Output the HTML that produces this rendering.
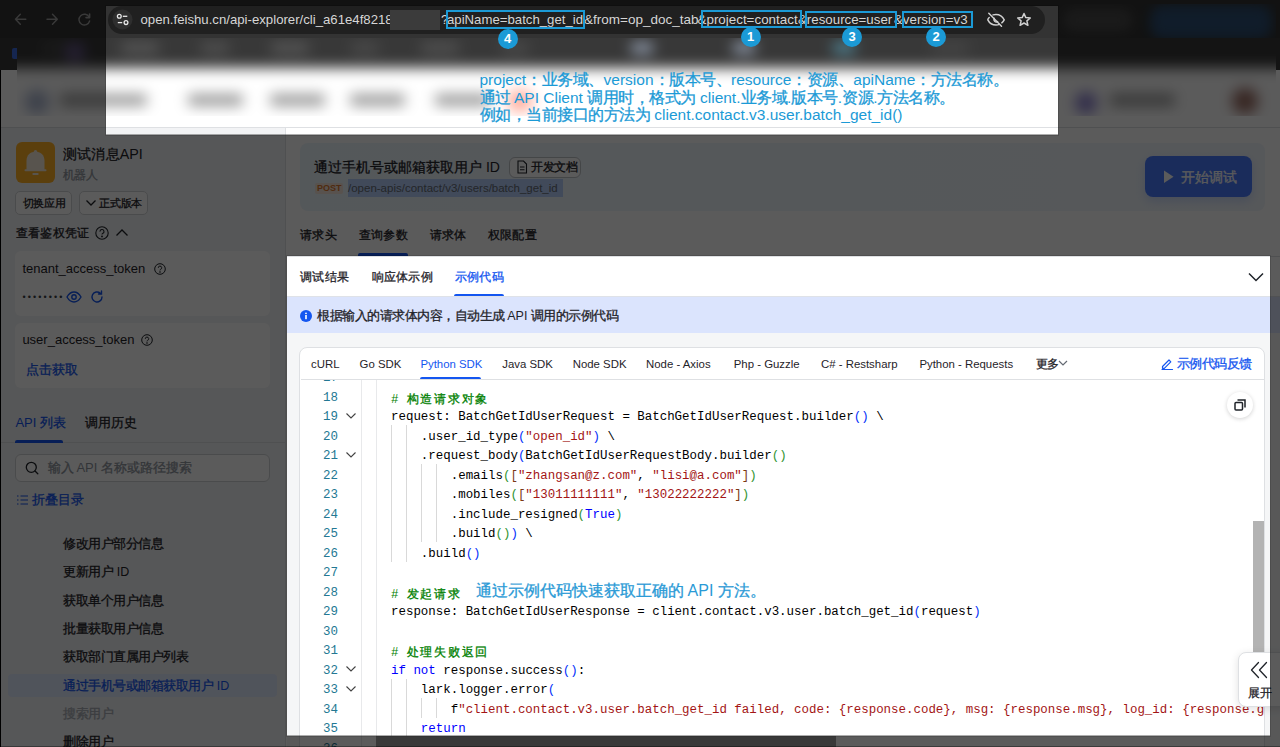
<!DOCTYPE html>
<html><head><meta charset="utf-8"><style>
html,body{margin:0;padding:0;width:1280px;height:747px;overflow:hidden;background:#fff;}
body{position:relative;font-family:"Liberation Sans",sans-serif;}
.t{position:absolute;white-space:pre;}
.r{position:absolute;box-sizing:border-box;}
.c,.cm{display:inline-block;width:1em;text-align:center;-webkit-text-stroke:.3px}
.cm{width:1.1em}
svg{position:absolute;overflow:visible;}
</style></head><body>

<div class="r" style="left:0px;top:0px;width:1280px;height:38px;background:#333333;"></div>
<svg style="left:0;top:0" width="120" height="38" fill="none" stroke="#a0a0a0" stroke-width="1.4" stroke-linecap="round" stroke-linejoin="round"><path d="M15.5 19.3H25.8M15.5 19.3L20.3 14.3M15.5 19.3L20.3 24.3"/><path d="M57.3 19.3H47M57.3 19.3L52.5 14.3M57.3 19.3L52.5 24.3"/><path d="M89.2 17.2A5.4 5.4 0 1 0 89.6 21"/><path d="M89.6 14V17.6H86" stroke-width="1.6"/></svg>
<div class="r" style="left:108px;top:6px;width:937px;height:27.5px;background:#202020;border-radius:14px"></div>
<svg style="left:108px;top:5px" width="30" height="30"><circle cx="14.5" cy="14.5" r="10" fill="#2e2e2e"/><g stroke="#e8e8e8" stroke-width="1.3" fill="none"><circle cx="11.3" cy="11.3" r="1.9"/><path d="M14.8 11.3H19.3"/><circle cx="18" cy="17.6" r="1.9"/><path d="M9.8 17.6H14.2"/></g></svg>
<div class="t" style="left:140.5px;top:10.50px;font-size:13.2px;line-height:18px;color:#d6d6d6;font-weight:400;font-family:'Liberation Sans', sans-serif;">open.feishu.cn/api-explorer/cli_a61e4f8218</div>
<div class="r" style="left:390px;top:10px;width:50px;height:20px;background:#3b3b3b;"></div>
<div class="t" style="left:441px;top:10.50px;font-size:13.2px;line-height:18px;color:#d6d6d6;font-weight:400;font-family:'Liberation Sans', sans-serif;">?</div>
<div class="t" style="left:447px;top:10.50px;font-size:13.2px;line-height:18px;color:#d6d6d6;font-weight:400;font-family:'Liberation Sans', sans-serif;">apiName=batch_get_id</div>
<div class="t" style="left:584px;top:10.00px;font-size:13.5px;line-height:19px;color:#d6d6d6;font-weight:400;font-family:'Liberation Sans', sans-serif;">&amp;from=op_doc_tab</div>
<div class="t" style="left:697.5px;top:10.00px;font-size:13.4px;line-height:19px;color:#d6d6d6;font-weight:400;font-family:'Liberation Sans', sans-serif;">&amp;project=contact</div>
<div class="t" style="left:798px;top:10.00px;font-size:13.3px;line-height:19px;color:#d6d6d6;font-weight:400;font-family:'Liberation Sans', sans-serif;">&amp;resource=user</div>
<div class="t" style="left:894px;top:10.00px;font-size:13.3px;line-height:19px;color:#d6d6d6;font-weight:400;font-family:'Liberation Sans', sans-serif;">&amp;version=v3</div>
<svg style="left:986px;top:11px" width="20" height="18" fill="none" stroke="#d0d0d0" stroke-width="1.5" stroke-linecap="round"><path d="M3.2 6.5C2.3 7.3 1.8 8.2 1.8 8.8C3.3 11.8 6.3 14 10 14C11.2 14 12.3 13.8 13.2 13.3M7 3.9C8 3.6 9 3.5 10 3.5C13.7 3.5 16.7 5.8 18.2 8.8C17.6 10 16.8 11 15.8 11.8"/><path d="M8.3 7.3A2.4 2.4 0 0 0 11.6 10.6"/><path d="M2.8 2.3L15.5 15.3"/></svg>
<svg style="left:1016px;top:11.5px" width="16" height="16" fill="none" stroke="#d0d0d0" stroke-width="1.5" stroke-linejoin="round"><path d="M8 1.5L9.8 5.6L14.3 6L10.9 8.9L11.9 13.3L8 11L4.1 13.3L5.1 8.9L1.7 6L6.2 5.6Z"/></svg>
<div class="r" style="left:1058px;top:4px;width:218px;height:34px;overflow:hidden;background:#333"><div style="position:absolute;left:-20px;top:-20px;width:260px;height:80px;filter:blur(6px)"><div style="position:absolute;left:25px;top:24px;width:70px;height:24px;background:#4a4a4a;border-radius:12px"></div><div style="position:absolute;left:112px;top:21px;width:122px;height:34px;background:#2d4f75;border-radius:14px"></div></div></div>
<div class="r" style="left:0px;top:38px;width:1280px;height:32px;background:#383838;"></div>
<div class="r" style="left:0px;top:70px;width:1280px;height:57px;background:#ffffff;"></div>
<div class="r" style="left:0px;top:127px;width:1280px;height:1px;background:#dee0e3;"></div>
<div class="r" style="left:12px;top:48px;width:8px;height:11px;background:#3d6be0;border-radius:2px"></div>
<div class="r" style="left:17px;top:38px;width:1259px;height:78px;overflow:hidden"><div style="position:absolute;left:-40px;top:-40px;width:1340px;height:160px;filter:blur(7px)"><div style="position:absolute;left:0;top:0;width:1340px;height:70px;background:#383838"></div><div style="position:absolute;left:0;top:70px;width:1340px;height:90px;background:#ffffff"></div><div style="position:absolute;left:63px;top:44px;width:30px;height:12px;background:#4a4a4a;border-radius:6px"></div><div style="position:absolute;left:143px;top:44px;width:40px;height:12px;background:#555;border-radius:6px"></div><div style="position:absolute;left:223px;top:44px;width:30px;height:12px;background:#505050;border-radius:6px"></div><div style="position:absolute;left:293px;top:44px;width:40px;height:12px;background:#555;border-radius:6px"></div><div style="position:absolute;left:373px;top:44px;width:30px;height:12px;background:#4a4a4a;border-radius:6px"></div><div style="position:absolute;left:443px;top:44px;width:40px;height:12px;background:#505050;border-radius:6px"></div><div style="position:absolute;left:523px;top:44px;width:30px;height:12px;background:#4a4a4a;border-radius:6px"></div><div style="position:absolute;left:653px;top:44px;width:24px;height:12px;background:#8a94a4;border-radius:6px"></div><div style="position:absolute;left:755px;top:44px;width:24px;height:12px;background:#8a94a4;border-radius:6px"></div><div style="position:absolute;left:855px;top:44px;width:24px;height:12px;background:#4f8090;border-radius:6px"></div><div style="position:absolute;left:953px;top:44px;width:40px;height:12px;background:#454545;border-radius:6px"></div><div style="position:absolute;left:48px;top:92px;width:24px;height:24px;background:#a8b4d0;border-radius:12px"></div><div style="position:absolute;left:83px;top:96px;width:87px;height:12px;background:#9a9a9a;border-radius:4px"></div><div style="position:absolute;left:211px;top:96px;width:55px;height:12px;background:#9a9a9a;border-radius:4px"></div><div style="position:absolute;left:293px;top:96px;width:55px;height:12px;background:#9a9a9a;border-radius:4px"></div><div style="position:absolute;left:373px;top:96px;width:55px;height:12px;background:#9a9a9a;border-radius:4px"></div><div style="position:absolute;left:458px;top:96px;width:55px;height:12px;background:#9a9a9a;border-radius:4px"></div><div style="position:absolute;left:1133px;top:96px;width:65px;height:12px;background:#9a9a9a;border-radius:4px"></div><div style="position:absolute;left:88px;top:44px;width:20px;height:20px;background:#6a5a90;border-radius:10px"></div><div style="position:absolute;left:1098px;top:94px;width:22px;height:22px;background:#8a7fd0;border-radius:11px"></div><div style="position:absolute;left:1255px;top:90px;width:26px;height:26px;background:#9a6a60;border-radius:13px"></div><div style="position:absolute;left:530px;top:92px;width:26px;height:22px;background:#ffb0a0;border-radius:11px"></div></div></div>
<div class="r" style="left:0px;top:128px;width:286px;height:619px;background:#f2f3f5;"></div>
<div class="r" style="left:285px;top:128px;width:1px;height:619px;background:#dee0e3;"></div>
<div class="r" style="left:15.5px;top:142px;width:39.5px;height:41px;background:#ffb026;border-radius:6px"></div>
<svg style="left:15.5px;top:142px" width="40" height="41"><g fill="#f4f4f4" opacity=".88"><path d="M10.5 28V19C10.5 12.8 14.5 9.8 19.5 9.8S28.5 12.8 28.5 19V28Z"/><circle cx="19.5" cy="9.6" r="1.7"/><rect x="8.5" y="27.2" width="22" height="2.1" rx="1"/><rect x="16.3" y="31" width="6.4" height="2" rx="1"/></g></svg>
<div class="t" style="left:62.5px;top:144.00px;font-size:14.3px;line-height:20px;color:#1f2329;font-weight:500;font-family:'Liberation Sans', sans-serif;"><span class=c>测</span><span class=c>试</span><span class=c>消</span><span class=c>息</span>API</div>
<div class="t" style="left:62.5px;top:166.70px;font-size:11.5px;line-height:16px;color:#8f959e;font-weight:400;font-family:'Liberation Sans', sans-serif;"><span class=c>机</span><span class=c>器</span><span class=c>人</span></div>
<div class="r" style="left:15px;top:191px;width:57px;height:24px;background:#fff;border:1px solid #d0d3d6;border-radius:5px"></div>
<div class="t" style="left:22.5px;top:195.50px;font-size:10.8px;line-height:15px;color:#1f2329;font-weight:400;font-family:'Liberation Sans', sans-serif;"><span class=c>切</span><span class=c>换</span><span class=c>应</span><span class=c>用</span></div>
<div class="r" style="left:79px;top:191px;width:69px;height:24px;background:#fff;border:1px solid #d0d3d6;border-radius:5px"></div>
<svg style="left:85px;top:199px" width="12" height="8" fill="none" stroke="#1f2329" stroke-width="1.3"><path d="M1.5 1.5L6 6L10.5 1.5"/></svg>
<div class="t" style="left:99px;top:195.50px;font-size:10.8px;line-height:15px;color:#1f2329;font-weight:400;font-family:'Liberation Sans', sans-serif;"><span class=c>正</span><span class=c>式</span><span class=c>版</span><span class=c>本</span></div>
<div class="t" style="left:15.7px;top:224.50px;font-size:12.3px;line-height:17px;color:#1f2329;font-weight:500;font-family:'Liberation Sans', sans-serif;"><span class=c>查</span><span class=c>看</span><span class=c>鉴</span><span class=c>权</span><span class=c>凭</span><span class=c>证</span></div>
<svg style="left:95px;top:226px" width="14" height="14" fill="none" stroke="#1f2329" stroke-width="1.1"><circle cx="7" cy="7" r="6.2"/><path d="M5 5.6A2 2 0 1 1 7.6 7.4C7.1 7.7 7 8 7 8.6"/><circle cx="7" cy="10.4" r=".4" fill="#1f2329"/></svg>
<svg style="left:115px;top:228px" width="14" height="10" fill="none" stroke="#1f2329" stroke-width="1.3"><path d="M1.5 7.5L7 2L12.5 7.5"/></svg>
<div class="r" style="left:15px;top:251px;width:255px;height:65px;background:#ffffff;border-radius:6px"></div>
<div class="t" style="left:22.4px;top:260.00px;font-size:13px;line-height:18px;color:#1f2329;font-weight:400;font-family:'Liberation Sans', sans-serif;">tenant_access_token</div>
<svg style="left:153.5px;top:263px" width="12" height="12" fill="none" stroke="#1f2329" stroke-width="1"><circle cx="6" cy="6" r="5.3"/><path d="M4.3 4.8A1.7 1.7 0 1 1 6.5 6.4C6.1 6.6 6 6.9 6 7.4"/><circle cx="6" cy="9" r=".35" fill="#1f2329"/></svg>
<div class="t" style="left:22.5px;top:290.50px;font-size:9px;line-height:13px;color:#3a3f47;font-weight:400;font-family:'Liberation Sans', sans-serif;letter-spacing:2.1px">••••••••</div>
<svg style="left:66px;top:291px" width="16" height="12" fill="none" stroke="#1456f0" stroke-width="1.4"><path d="M1 6C3 2.5 5.5 1 8 1S13 2.5 15 6C13 9.5 10.5 11 8 11S3 9.5 1 6Z"/><circle cx="8" cy="6" r="2.2"/></svg>
<svg style="left:90px;top:290px" width="14" height="14" fill="none" stroke="#1456f0" stroke-width="1.4" stroke-linecap="round"><path d="M12 7A5 5 0 1 1 10.3 3.2M11.5 1V4H8.5"/></svg>
<div class="r" style="left:15px;top:323px;width:255px;height:65px;background:#ffffff;border-radius:6px"></div>
<div class="t" style="left:22.4px;top:331.40px;font-size:13px;line-height:18px;color:#1f2329;font-weight:400;font-family:'Liberation Sans', sans-serif;">user_access_token</div>
<svg style="left:141px;top:334.4px" width="12" height="12" fill="none" stroke="#1f2329" stroke-width="1"><circle cx="6" cy="6" r="5.3"/><path d="M4.3 4.8A1.7 1.7 0 1 1 6.5 6.4C6.1 6.6 6 6.9 6 7.4"/><circle cx="6" cy="9" r=".35" fill="#1f2329"/></svg>
<div class="t" style="left:26px;top:360.50px;font-size:13px;line-height:18px;color:#1456f0;font-weight:400;font-family:'Liberation Sans', sans-serif;"><span class=c>点</span><span class=c>击</span><span class=c>获</span><span class=c>取</span></div>
<div class="t" style="left:15.4px;top:414.00px;font-size:13px;line-height:18px;color:#1456f0;font-weight:500;font-family:'Liberation Sans', sans-serif;">API <span class=c>列</span><span class=c>表</span></div>
<div class="t" style="left:85px;top:414.00px;font-size:13px;line-height:18px;color:#1f2329;font-weight:400;font-family:'Liberation Sans', sans-serif;"><span class=c>调</span><span class=c>用</span><span class=c>历</span><span class=c>史</span></div>
<div class="r" style="left:0px;top:442px;width:285px;height:1px;background:#dee0e3;"></div>
<div class="r" style="left:15px;top:440px;width:48px;height:3px;background:#1456f0;border-radius:2px 2px 0 0"></div>
<div class="r" style="left:15px;top:454px;width:255px;height:28px;background:#ffffff;border:1px solid #d0d3d6;border-radius:6px"></div>
<svg style="left:25px;top:461px" width="14" height="14" fill="none" stroke="#1f2329" stroke-width="1.3" stroke-linecap="round"><circle cx="6.3" cy="6.3" r="5"/><path d="M10 10L12.8 12.8"/></svg>
<div class="t" style="left:47.5px;top:459.00px;font-size:13px;line-height:18px;color:#8f959e;font-weight:400;font-family:'Liberation Sans', sans-serif;"><span class=c>输</span><span class=c>入</span> API <span class=c>名</span><span class=c>称</span><span class=c>或</span><span class=c>路</span><span class=c>径</span><span class=c>搜</span><span class=c>索</span></div>
<svg style="left:16px;top:494px" width="12" height="12" fill="none" stroke="#1456f0" stroke-width="1"><path d="M4.5 2H12M4.5 6H12M4.5 10H12"/><path d="M1 2H2.5M1 6H2.5M1 10H2.5"/></svg>
<div class="t" style="left:32px;top:491.00px;font-size:13px;line-height:18px;color:#1456f0;font-weight:500;font-family:'Liberation Sans', sans-serif;"><span class=c>折</span><span class=c>叠</span><span class=c>目</span><span class=c>录</span></div>
<div class="r" style="left:8px;top:673.5px;width:269px;height:23.5px;background:#e1eaff;border-radius:4px"></div>
<div class="t" style="left:63.3px;top:535.20px;font-size:12.5px;line-height:18px;color:#1f2329;font-weight:400;font-family:'Liberation Sans', sans-serif;"><span class=c>修</span><span class=c>改</span><span class=c>用</span><span class=c>户</span><span class=c>部</span><span class=c>分</span><span class=c>信</span><span class=c>息</span></div>
<div class="t" style="left:63.3px;top:563.40px;font-size:12.5px;line-height:18px;color:#1f2329;font-weight:400;font-family:'Liberation Sans', sans-serif;"><span class=c>更</span><span class=c>新</span><span class=c>用</span><span class=c>户</span> ID</div>
<div class="t" style="left:63.3px;top:592.00px;font-size:12.5px;line-height:18px;color:#1f2329;font-weight:400;font-family:'Liberation Sans', sans-serif;"><span class=c>获</span><span class=c>取</span><span class=c>单</span><span class=c>个</span><span class=c>用</span><span class=c>户</span><span class=c>信</span><span class=c>息</span></div>
<div class="t" style="left:63.3px;top:620.20px;font-size:12.5px;line-height:18px;color:#1f2329;font-weight:400;font-family:'Liberation Sans', sans-serif;"><span class=c>批</span><span class=c>量</span><span class=c>获</span><span class=c>取</span><span class=c>用</span><span class=c>户</span><span class=c>信</span><span class=c>息</span></div>
<div class="t" style="left:63.3px;top:648.40px;font-size:12.5px;line-height:18px;color:#1f2329;font-weight:400;font-family:'Liberation Sans', sans-serif;"><span class=c>获</span><span class=c>取</span><span class=c>部</span><span class=c>门</span><span class=c>直</span><span class=c>属</span><span class=c>用</span><span class=c>户</span><span class=c>列</span><span class=c>表</span></div>
<div class="t" style="left:63.3px;top:677.20px;font-size:12.5px;line-height:18px;color:#1456f0;font-weight:400;font-family:'Liberation Sans', sans-serif;"><span class=c>通</span><span class=c>过</span><span class=c>手</span><span class=c>机</span><span class=c>号</span><span class=c>或</span><span class=c>邮</span><span class=c>箱</span><span class=c>获</span><span class=c>取</span><span class=c>用</span><span class=c>户</span> ID</div>
<div class="t" style="left:63.3px;top:704.80px;font-size:12.5px;line-height:18px;color:#a6abb3;font-weight:400;font-family:'Liberation Sans', sans-serif;"><span class=c>搜</span><span class=c>索</span><span class=c>用</span><span class=c>户</span></div>
<div class="t" style="left:63.3px;top:733.10px;font-size:12.5px;line-height:18px;color:#1f2329;font-weight:400;font-family:'Liberation Sans', sans-serif;"><span class=c>删</span><span class=c>除</span><span class=c>用</span><span class=c>户</span></div>
<div class="r" style="left:0px;top:70px;width:1px;height:677px;background:#000000;"></div>
<div class="r" style="left:287px;top:128px;width:993px;height:128px;background:#ffffff;"></div>
<div class="r" style="left:300px;top:142.5px;width:965px;height:68.0px;background:linear-gradient(90deg,#ecf5fb,#f1f6fc);border-radius:8px"></div>
<div class="t" style="left:314px;top:157.00px;font-size:14px;line-height:20px;color:#1f2329;font-weight:500;font-family:'Liberation Sans', sans-serif;"><span class=c>通</span><span class=c>过</span><span class=c>手</span><span class=c>机</span><span class=c>号</span><span class=c>或</span><span class=c>邮</span><span class=c>箱</span><span class=c>获</span><span class=c>取</span><span class=c>用</span><span class=c>户</span> ID</div>
<div class="r" style="left:508.75px;top:156.5px;width:72.5px;height:21.0px;background:#ffffff;border:1px solid #bfc3c8;border-radius:6px"></div>
<svg style="left:516px;top:160px" width="12" height="14" fill="none" stroke="#1f2329" stroke-width="1.1"><path d="M2 1H7.5L10.5 4V13H2Z"/><path d="M4 7H8.5M4 9.8H8.5"/></svg>
<div class="t" style="left:531px;top:158.50px;font-size:11.5px;line-height:16px;color:#1f2329;font-weight:400;font-family:'Liberation Sans', sans-serif;"><span class=c>开</span><span class=c>发</span><span class=c>文</span><span class=c>档</span></div>
<div class="r" style="left:314.5px;top:183px;width:28.5px;height:11px;background:#f6e6da;border-radius:2px"></div>
<div class="t" style="left:317px;top:182.00px;font-size:9px;line-height:13px;color:#de7a30;font-weight:700;font-family:'Liberation Sans', sans-serif;">POST</div>
<div class="r" style="left:347.5px;top:179px;width:215.0px;height:18px;background:#b5cffc;"></div>
<div class="t" style="left:348px;top:180.00px;font-size:11.5px;line-height:16px;color:#646a73;font-weight:400;font-family:'Liberation Sans', sans-serif;">/open-apis/contact/v3/users/batch_get_id</div>
<div class="r" style="left:1145px;top:156px;width:107px;height:41px;background:#4A7CFF;border-radius:8px;box-shadow:0 4px 10px rgba(51,112,255,.2)"></div>
<svg style="left:1163px;top:170px" width="12" height="14"><path d="M1 0.5L10.5 6.75L1 13Z" fill="#fff"/></svg>
<div class="t" style="left:1180.5px;top:166.50px;font-size:14px;line-height:20px;color:#ffffff;font-weight:400;font-family:'Liberation Sans', sans-serif;"><span class=c>开</span><span class=c>始</span><span class=c>调</span><span class=c>试</span></div>
<div class="t" style="left:300px;top:226.50px;font-size:12.3px;line-height:17px;color:#1f2329;font-weight:400;font-family:'Liberation Sans', sans-serif;"><span class=c>请</span><span class=c>求</span><span class=c>头</span></div>
<div class="t" style="left:358.75px;top:226.50px;font-size:12.3px;line-height:17px;color:#1f2329;font-weight:500;font-family:'Liberation Sans', sans-serif;"><span class=c>查</span><span class=c>询</span><span class=c>参</span><span class=c>数</span></div>
<div class="t" style="left:429.5px;top:226.50px;font-size:12.3px;line-height:17px;color:#1f2329;font-weight:400;font-family:'Liberation Sans', sans-serif;"><span class=c>请</span><span class=c>求</span><span class=c>体</span></div>
<div class="t" style="left:487.5px;top:226.50px;font-size:12.3px;line-height:17px;color:#1f2329;font-weight:400;font-family:'Liberation Sans', sans-serif;"><span class=c>权</span><span class=c>限</span><span class=c>配</span><span class=c>置</span></div>
<div class="r" style="left:358px;top:252.5px;width:50px;height:3.5px;background:#1456f0;border-radius:2px 2px 0 0"></div>
<div class="r" style="left:287px;top:256px;width:993px;height:491px;background:#ffffff;border-top:1px solid #dee0e3"></div>
<div class="t" style="left:300px;top:268.50px;font-size:12.3px;line-height:17px;color:#1f2329;font-weight:400;font-family:'Liberation Sans', sans-serif;"><span class=c>调</span><span class=c>试</span><span class=c>结</span><span class=c>果</span></div>
<div class="t" style="left:371.4px;top:268.50px;font-size:12.3px;line-height:17px;color:#1f2329;font-weight:400;font-family:'Liberation Sans', sans-serif;"><span class=c>响</span><span class=c>应</span><span class=c>体</span><span class=c>示</span><span class=c>例</span></div>
<div class="t" style="left:454.5px;top:268.50px;font-size:12.3px;line-height:17px;color:#1456f0;font-weight:500;font-family:'Liberation Sans', sans-serif;"><span class=c>示</span><span class=c>例</span><span class=c>代</span><span class=c>码</span></div>
<div class="r" style="left:454px;top:294px;width:50px;height:2.5px;background:#1456f0;border-radius:2px 2px 0 0"></div>
<svg style="left:1248px;top:272px" width="16" height="10" fill="none" stroke="#1f2329" stroke-width="1.5"><path d="M1 1.5L8 8.5L15 1.5"/></svg>
<div class="r" style="left:287px;top:296px;width:993px;height:36.5px;background:#dbe4fd;border-top:1px solid #dfe2e8"></div>
<svg style="left:299.7px;top:309.7px" width="12" height="12"><circle cx="6" cy="6" r="6" fill="#1456f0"/><rect x="5.2" y="5" width="1.6" height="4.2" fill="#fff"/><circle cx="6" cy="3.3" r="0.9" fill="#fff"/></svg>
<div class="t" style="left:317px;top:306.70px;font-size:12.5px;line-height:18px;color:#1f2329;font-weight:400;font-family:'Liberation Sans', sans-serif;"><span class=c>根</span><span class=c>据</span><span class=c>输</span><span class=c>入</span><span class=c>的</span><span class=c>请</span><span class=c>求</span><span class=c>体</span><span class=c>内</span><span class=c>容</span><span class=c>，</span><span class=c>自</span><span class=c>动</span><span class=c>生</span><span class=c>成</span> API <span class=c>调</span><span class=c>用</span><span class=c>的</span><span class=c>示</span><span class=c>例</span><span class=c>代</span><span class=c>码</span></div>
<div class="r" style="left:287px;top:332.5px;width:993px;height:414.5px;background:#f5f6f7;"></div>
<div class="r" style="left:299px;top:347px;width:966px;height:413px;background:#ffffff;border:1px solid #dee0e3;border-radius:8px"></div>
<div class="t" style="left:311px;top:356.00px;font-size:11.4px;line-height:16px;color:#1f2329;font-weight:400;font-family:'Liberation Sans', sans-serif;">cURL</div>
<div class="t" style="left:359.6px;top:356.00px;font-size:11.4px;line-height:16px;color:#1f2329;font-weight:400;font-family:'Liberation Sans', sans-serif;">Go SDK</div>
<div class="t" style="left:420.4px;top:356.00px;font-size:11.4px;line-height:16px;color:#1456f0;font-weight:400;font-family:'Liberation Sans', sans-serif;">Python SDK</div>
<div class="t" style="left:502.3px;top:356.00px;font-size:11.4px;line-height:16px;color:#1f2329;font-weight:400;font-family:'Liberation Sans', sans-serif;">Java SDK</div>
<div class="t" style="left:572.7px;top:356.00px;font-size:11.4px;line-height:16px;color:#1f2329;font-weight:400;font-family:'Liberation Sans', sans-serif;">Node SDK</div>
<div class="t" style="left:646px;top:356.00px;font-size:11.4px;line-height:16px;color:#1f2329;font-weight:400;font-family:'Liberation Sans', sans-serif;">Node - Axios</div>
<div class="t" style="left:733.75px;top:356.00px;font-size:11.4px;line-height:16px;color:#1f2329;font-weight:400;font-family:'Liberation Sans', sans-serif;">Php - Guzzle</div>
<div class="t" style="left:821px;top:356.00px;font-size:11.4px;line-height:16px;color:#1f2329;font-weight:400;font-family:'Liberation Sans', sans-serif;">C# - Restsharp</div>
<div class="t" style="left:919.4px;top:356.00px;font-size:11.4px;line-height:16px;color:#1f2329;font-weight:400;font-family:'Liberation Sans', sans-serif;">Python - Requests</div>
<div class="t" style="left:1035.9px;top:356.00px;font-size:11.5px;line-height:16px;color:#1f2329;font-weight:400;font-family:'Liberation Sans', sans-serif;"><span class=c>更</span><span class=c>多</span></div>
<svg style="left:1058px;top:360px" width="10" height="7" fill="none" stroke="#646a73" stroke-width="1.2"><path d="M1 1L5 5L9 1"/></svg>
<svg style="left:1160px;top:357px" width="14" height="14" fill="none" stroke="#1456f0" stroke-width="1.2" stroke-linejoin="round" stroke-linecap="round"><path d="M2.5 9.5L9 3L10.8 4.8L4.3 11.3H2.5Z"/><path d="M2 12.5H12.5"/></svg>
<div class="t" style="left:1176.8px;top:355.00px;font-size:12.5px;line-height:18px;color:#1456f0;font-weight:400;font-family:'Liberation Sans', sans-serif;"><span class=c>示</span><span class=c>例</span><span class=c>代</span><span class=c>码</span><span class=c>反</span><span class=c>馈</span></div>
<div class="r" style="left:420.3px;top:377px;width:61.0px;height:2.5px;background:#1456f0;border-radius:2px 2px 0 0"></div>
<div class="r" style="left:301px;top:379px;width:963px;height:1px;background:#dee0e3;"></div>
<div class="r" style="left:301px;top:380px;width:963px;height:370px;overflow:hidden">
<div class="r" style="left:60px;top:0px;width:1px;height:400px;background:#e8e9eb;"></div>
<div class="r" style="left:75px;top:0px;width:1px;height:400px;background:#e8e9eb;"></div>
<div class="r" style="left:90px;top:45.25px;width:1px;height:19.5px;background:#d9d9d9;"></div>
<div class="r" style="left:105px;top:45.25px;width:1px;height:19.5px;background:#d9d9d9;"></div>
<div class="r" style="left:90px;top:64.75px;width:1px;height:19.5px;background:#d9d9d9;"></div>
<div class="r" style="left:105px;top:64.75px;width:1px;height:19.5px;background:#d9d9d9;"></div>
<div class="r" style="left:90px;top:84.25px;width:1px;height:19.5px;background:#d9d9d9;"></div>
<div class="r" style="left:105px;top:84.25px;width:1px;height:19.5px;background:#d9d9d9;"></div>
<div class="r" style="left:120px;top:84.25px;width:1px;height:19.5px;background:#d9d9d9;"></div>
<div class="r" style="left:135px;top:84.25px;width:1px;height:19.5px;background:#d9d9d9;"></div>
<div class="r" style="left:90px;top:103.75px;width:1px;height:19.5px;background:#d9d9d9;"></div>
<div class="r" style="left:105px;top:103.75px;width:1px;height:19.5px;background:#d9d9d9;"></div>
<div class="r" style="left:120px;top:103.75px;width:1px;height:19.5px;background:#d9d9d9;"></div>
<div class="r" style="left:135px;top:103.75px;width:1px;height:19.5px;background:#d9d9d9;"></div>
<div class="r" style="left:90px;top:123.25px;width:1px;height:19.5px;background:#d9d9d9;"></div>
<div class="r" style="left:105px;top:123.25px;width:1px;height:19.5px;background:#d9d9d9;"></div>
<div class="r" style="left:120px;top:123.25px;width:1px;height:19.5px;background:#d9d9d9;"></div>
<div class="r" style="left:135px;top:123.25px;width:1px;height:19.5px;background:#d9d9d9;"></div>
<div class="r" style="left:90px;top:142.75px;width:1px;height:19.5px;background:#d9d9d9;"></div>
<div class="r" style="left:105px;top:142.75px;width:1px;height:19.5px;background:#d9d9d9;"></div>
<div class="r" style="left:120px;top:142.75px;width:1px;height:19.5px;background:#d9d9d9;"></div>
<div class="r" style="left:135px;top:142.75px;width:1px;height:19.5px;background:#d9d9d9;"></div>
<div class="r" style="left:90px;top:162.25px;width:1px;height:19.5px;background:#d9d9d9;"></div>
<div class="r" style="left:105px;top:162.25px;width:1px;height:19.5px;background:#d9d9d9;"></div>
<div class="r" style="left:90px;top:298.75px;width:1px;height:19.5px;background:#d9d9d9;"></div>
<div class="r" style="left:105px;top:298.75px;width:1px;height:19.5px;background:#d9d9d9;"></div>
<div class="r" style="left:90px;top:318.25px;width:1px;height:19.5px;background:#d9d9d9;"></div>
<div class="r" style="left:105px;top:318.25px;width:1px;height:19.5px;background:#d9d9d9;"></div>
<div class="r" style="left:120px;top:318.25px;width:1px;height:19.5px;background:#d9d9d9;"></div>
<div class="r" style="left:135px;top:318.25px;width:1px;height:19.5px;background:#d9d9d9;"></div>
<div class="r" style="left:90px;top:337.75px;width:1px;height:19.5px;background:#d9d9d9;"></div>
<div class="r" style="left:105px;top:337.75px;width:1px;height:19.5px;background:#d9d9d9;"></div>
<div class="r" style="left:90px;top:357.25px;width:1px;height:19.5px;background:#d9d9d9;"></div>
<div class="r" style="left:105px;top:357.25px;width:1px;height:19.5px;background:#d9d9d9;"></div>
<div class="t" style="left:0px;width:37px;text-align:right;top:-8.75px;line-height:19.5px;font:12.45px 'Liberation Mono', monospace;color:#237893">17</div>
<div class="t" style="left:0px;width:37px;text-align:right;top:10.75px;line-height:19.5px;font:12.45px 'Liberation Mono', monospace;color:#237893">18</div>
<div class="t" style="left:90px;top:10.75px;line-height:19.5px;font:12.45px 'Liberation Mono', monospace"><span style="color:#008000"># <span class=cm>构</span><span class=cm>造</span><span class=cm>请</span><span class=cm>求</span><span class=cm>对</span><span class=cm>象</span></span></div>
<div class="t" style="left:0px;width:37px;text-align:right;top:30.25px;line-height:19.5px;font:12.45px 'Liberation Mono', monospace;color:#237893">19</div>
<svg style="left:44px;top:31.50px" width="12" height="8" fill="none" stroke="#424242" stroke-width="1.1"><path d="M1.5 1.5L6 6L10.5 1.5"/></svg>
<div class="t" style="left:90px;top:30.25px;line-height:19.5px;font:12.45px 'Liberation Mono', monospace"><span style="color:#000000">request: BatchGetIdUserRequest = BatchGetIdUserRequest.builder</span><span style="color:#0431fa">()</span><span style="color:#000000"> \</span></div>
<div class="t" style="left:0px;width:37px;text-align:right;top:49.75px;line-height:19.5px;font:12.45px 'Liberation Mono', monospace;color:#237893">20</div>
<div class="t" style="left:90px;top:49.75px;line-height:19.5px;font:12.45px 'Liberation Mono', monospace"><span style="color:#000000">    .user_id_type</span><span style="color:#0431fa">(</span><span style="color:#a31515">&quot;open_id&quot;</span><span style="color:#0431fa">)</span><span style="color:#000000"> \</span></div>
<div class="t" style="left:0px;width:37px;text-align:right;top:69.25px;line-height:19.5px;font:12.45px 'Liberation Mono', monospace;color:#237893">21</div>
<svg style="left:44px;top:70.50px" width="12" height="8" fill="none" stroke="#424242" stroke-width="1.1"><path d="M1.5 1.5L6 6L10.5 1.5"/></svg>
<div class="t" style="left:90px;top:69.25px;line-height:19.5px;font:12.45px 'Liberation Mono', monospace"><span style="color:#000000">    .request_body</span><span style="color:#0431fa">(</span><span style="color:#000000">BatchGetIdUserRequestBody.builder</span><span style="color:#319331">()</span></div>
<div class="t" style="left:0px;width:37px;text-align:right;top:88.75px;line-height:19.5px;font:12.45px 'Liberation Mono', monospace;color:#237893">22</div>
<div class="t" style="left:90px;top:88.75px;line-height:19.5px;font:12.45px 'Liberation Mono', monospace"><span style="color:#000000">        .emails</span><span style="color:#319331">(</span><span style="color:#7b3814">[</span><span style="color:#a31515">&quot;zhangsan@z.com&quot;</span><span style="color:#000000">, </span><span style="color:#a31515">&quot;lisi@a.com&quot;</span><span style="color:#7b3814">]</span><span style="color:#319331">)</span></div>
<div class="t" style="left:0px;width:37px;text-align:right;top:108.25px;line-height:19.5px;font:12.45px 'Liberation Mono', monospace;color:#237893">23</div>
<div class="t" style="left:90px;top:108.25px;line-height:19.5px;font:12.45px 'Liberation Mono', monospace"><span style="color:#000000">        .mobiles</span><span style="color:#319331">(</span><span style="color:#7b3814">[</span><span style="color:#a31515">&quot;13011111111&quot;</span><span style="color:#000000">, </span><span style="color:#a31515">&quot;13022222222&quot;</span><span style="color:#7b3814">]</span><span style="color:#319331">)</span></div>
<div class="t" style="left:0px;width:37px;text-align:right;top:127.75px;line-height:19.5px;font:12.45px 'Liberation Mono', monospace;color:#237893">24</div>
<div class="t" style="left:90px;top:127.75px;line-height:19.5px;font:12.45px 'Liberation Mono', monospace"><span style="color:#000000">        .include_resigned</span><span style="color:#319331">(</span><span style="color:#0000ff">True</span><span style="color:#319331">)</span></div>
<div class="t" style="left:0px;width:37px;text-align:right;top:147.25px;line-height:19.5px;font:12.45px 'Liberation Mono', monospace;color:#237893">25</div>
<div class="t" style="left:90px;top:147.25px;line-height:19.5px;font:12.45px 'Liberation Mono', monospace"><span style="color:#000000">        .build</span><span style="color:#319331">()</span><span style="color:#0431fa">)</span><span style="color:#000000"> \</span></div>
<div class="t" style="left:0px;width:37px;text-align:right;top:166.75px;line-height:19.5px;font:12.45px 'Liberation Mono', monospace;color:#237893">26</div>
<div class="t" style="left:90px;top:166.75px;line-height:19.5px;font:12.45px 'Liberation Mono', monospace"><span style="color:#000000">    .build</span><span style="color:#0431fa">()</span></div>
<div class="t" style="left:0px;width:37px;text-align:right;top:186.25px;line-height:19.5px;font:12.45px 'Liberation Mono', monospace;color:#237893">27</div>
<div class="t" style="left:0px;width:37px;text-align:right;top:205.75px;line-height:19.5px;font:12.45px 'Liberation Mono', monospace;color:#237893">28</div>
<div class="t" style="left:90px;top:205.75px;line-height:19.5px;font:12.45px 'Liberation Mono', monospace"><span style="color:#008000"># <span class=cm>发</span><span class=cm>起</span><span class=cm>请</span><span class=cm>求</span></span></div>
<div class="t" style="left:0px;width:37px;text-align:right;top:225.25px;line-height:19.5px;font:12.45px 'Liberation Mono', monospace;color:#237893">29</div>
<div class="t" style="left:90px;top:225.25px;line-height:19.5px;font:12.45px 'Liberation Mono', monospace"><span style="color:#000000">response: BatchGetIdUserResponse = client.contact.v3.user.batch_get_id</span><span style="color:#0431fa">(</span><span style="color:#000000">request</span><span style="color:#0431fa">)</span></div>
<div class="t" style="left:0px;width:37px;text-align:right;top:244.75px;line-height:19.5px;font:12.45px 'Liberation Mono', monospace;color:#237893">30</div>
<div class="t" style="left:0px;width:37px;text-align:right;top:264.25px;line-height:19.5px;font:12.45px 'Liberation Mono', monospace;color:#237893">31</div>
<div class="t" style="left:90px;top:264.25px;line-height:19.5px;font:12.45px 'Liberation Mono', monospace"><span style="color:#008000"># <span class=cm>处</span><span class=cm>理</span><span class=cm>失</span><span class=cm>败</span><span class=cm>返</span><span class=cm>回</span></span></div>
<div class="t" style="left:0px;width:37px;text-align:right;top:283.75px;line-height:19.5px;font:12.45px 'Liberation Mono', monospace;color:#237893">32</div>
<svg style="left:44px;top:285.00px" width="12" height="8" fill="none" stroke="#424242" stroke-width="1.1"><path d="M1.5 1.5L6 6L10.5 1.5"/></svg>
<div class="t" style="left:90px;top:283.75px;line-height:19.5px;font:12.45px 'Liberation Mono', monospace"><span style="color:#0000ff">if</span><span style="color:#000000"> </span><span style="color:#0000ff">not</span><span style="color:#000000"> response.success</span><span style="color:#0431fa">()</span><span style="color:#000000">:</span></div>
<div class="t" style="left:0px;width:37px;text-align:right;top:303.25px;line-height:19.5px;font:12.45px 'Liberation Mono', monospace;color:#237893">33</div>
<svg style="left:44px;top:304.50px" width="12" height="8" fill="none" stroke="#424242" stroke-width="1.1"><path d="M1.5 1.5L6 6L10.5 1.5"/></svg>
<div class="t" style="left:90px;top:303.25px;line-height:19.5px;font:12.45px 'Liberation Mono', monospace"><span style="color:#000000">    lark.logger.error</span><span style="color:#0431fa">(</span></div>
<div class="t" style="left:0px;width:37px;text-align:right;top:322.75px;line-height:19.5px;font:12.45px 'Liberation Mono', monospace;color:#237893">34</div>
<div class="t" style="left:90px;top:322.75px;line-height:19.5px;font:12.45px 'Liberation Mono', monospace"><span style="color:#000000">        f</span><span style="color:#a31515">&quot;client.contact.v3.user.batch_get_id failed, code: {response.code}, msg: {response.msg}, log_id: {response.get_log_id()}&quot;</span></div>
<div class="t" style="left:0px;width:37px;text-align:right;top:342.25px;line-height:19.5px;font:12.45px 'Liberation Mono', monospace;color:#237893">35</div>
<div class="t" style="left:90px;top:342.25px;line-height:19.5px;font:12.45px 'Liberation Mono', monospace"><span style="color:#0000ff">    return</span></div>
<div class="t" style="left:0px;width:37px;text-align:right;top:361.75px;line-height:19.5px;font:12.45px 'Liberation Mono', monospace;color:#237893">36</div>
</div>
<div class="r" style="left:470px;top:580px;width:280px;height:22px;background:#ffffff;"></div>
<div class="t" style="left:476px;top:580.00px;font-size:16px;line-height:22px;color:#2a9ad6;font-weight:400;font-family:'Liberation Sans', sans-serif;"><span class=c>通</span><span class=c>过</span><span class=c>示</span><span class=c>例</span><span class=c>代</span><span class=c>码</span><span class=c>快</span><span class=c>速</span><span class=c>获</span><span class=c>取</span><span class=c>正</span><span class=c>确</span><span class=c>的</span> API <span class=c>方</span><span class=c>法</span><span class=c>。</span></div>
<div class="r" style="left:1227px;top:391.6px;width:26px;height:26px;border-radius:13px;background:#fff;box-shadow:0 1px 4px rgba(0,0,0,.18)"></div>
<svg style="left:1233px;top:397.6px" width="14" height="14" fill="none" stroke="#1f2329" stroke-width="1.5"><rect x="2" y="4.5" width="7.5" height="7.5" rx="1"/><path d="M4.5 2H12V9.5"/></svg>
<div class="r" style="left:1252.8px;top:520.5px;width:11.600000000000136px;height:179.5px;background:#b3b3b3;"></div>
<div class="r" style="left:376px;top:736px;width:460px;height:11px;background:#a0a0a0;"></div>
<div class="r" style="left:1238px;top:652px;width:50px;height:55px;background:#fff;border:1px solid #dee0e3;border-radius:8px;box-shadow:0 2px 8px rgba(0,0,0,.12)"></div>
<svg style="left:1248px;top:661px" width="20" height="18" fill="none" stroke="#1f2329" stroke-width="1.3" stroke-linecap="round" stroke-linejoin="round"><path d="M10.5 1.5L3.5 9L10.5 16.5M18.5 1.5L11.5 9L18.5 16.5"/></svg>
<div class="t" style="left:1248px;top:685.00px;font-size:12px;line-height:17px;color:#1f2329;font-weight:500;font-family:'Liberation Sans', sans-serif;"><span class=c>展</span><span class=c>开</span></div>
<svg style="left:0;top:0;z-index:50" width="1280" height="747"><path fill-rule="evenodd" fill="rgba(0,0,0,0.645)" d="M0 0H1280V747H0Z M106 6H1058V134.5H106Z M287 256H1270V735.5H287Z"/></svg>
<div class="r" style="z-index:51;left:105px;top:5px;width:954px;height:130.5px;border:1px solid rgba(0,0,0,.12)"></div>
<div class="r" style="z-index:51;left:286px;top:255px;width:985px;height:481.5px;border:1px solid rgba(0,0,0,.12)"></div>
<div class="r" style="left:0px;top:745.5px;width:1280px;height:1.5px;background:rgba(0,0,0,.35);z-index:52"></div>
<div class="r" style="z-index:60;left:445.5px;top:9.5px;width:139.5px;height:19.0px;border:2px solid #1b9ad6"></div>
<div class="r" style="z-index:60;left:701px;top:10px;width:101px;height:18px;border:2px solid #1b9ad6"></div>
<div class="r" style="z-index:60;left:805px;top:10.5px;width:92px;height:17.5px;border:2px solid #1b9ad6"></div>
<div class="r" style="z-index:60;left:901.5px;top:10.5px;width:71.5px;height:17.5px;border:2px solid #1b9ad6"></div>
<div class="r" style="z-index:61;left:497.5px;top:29px;width:20px;height:20px;border-radius:10px;background:#1b9ad6;color:#fff;font:700 13px/20px 'Liberation Sans', sans-serif;text-align:center">4</div>
<div class="r" style="z-index:61;left:740.7px;top:27px;width:20px;height:20px;border-radius:10px;background:#1b9ad6;color:#fff;font:700 13px/20px 'Liberation Sans', sans-serif;text-align:center">1</div>
<div class="r" style="z-index:61;left:842px;top:27px;width:20px;height:20px;border-radius:10px;background:#1b9ad6;color:#fff;font:700 13px/20px 'Liberation Sans', sans-serif;text-align:center">3</div>
<div class="r" style="z-index:61;left:926px;top:27px;width:20px;height:20px;border-radius:10px;background:#1b9ad6;color:#fff;font:700 13px/20px 'Liberation Sans', sans-serif;text-align:center">2</div>
<div class="r" style="z-index:55;left:470px;top:68px;width:540px;height:58px;background:rgba(255,255,255,0)"></div>
<div class="t" style="left:479.5px;top:70.80px;font-size:15.5px;line-height:18px;color:#1b9ad6;font-weight:400;font-family:'Liberation Sans', sans-serif;z-index:62">project<span class=c>：</span><span class=c>业</span><span class=c>务</span><span class=c>域</span><span class=c>、</span>version<span class=c>：</span><span class=c>版</span><span class=c>本</span><span class=c>号</span><span class=c>、</span>resource<span class=c>：</span><span class=c>资</span><span class=c>源</span><span class=c>、</span>apiName<span class=c>：</span><span class=c>方</span><span class=c>法</span><span class=c>名</span><span class=c>称</span><span class=c>。</span></div>
<div class="t" style="left:479.5px;top:89.00px;font-size:15.5px;line-height:18px;color:#1b9ad6;font-weight:400;font-family:'Liberation Sans', sans-serif;z-index:62"><span class=c>通</span><span class=c>过</span> API Client <span class=c>调</span><span class=c>用</span><span class=c>时</span><span class=c>，</span><span class=c>格</span><span class=c>式</span><span class=c>为</span> client.<span class=c>业</span><span class=c>务</span><span class=c>域</span>.<span class=c>版</span><span class=c>本</span><span class=c>号</span>.<span class=c>资</span><span class=c>源</span>.<span class=c>方</span><span class=c>法</span><span class=c>名</span><span class=c>称</span><span class=c>。</span></div>
<div class="t" style="left:479.5px;top:105.90px;font-size:15.5px;line-height:18px;color:#1b9ad6;font-weight:400;font-family:'Liberation Sans', sans-serif;z-index:62"><span class=c>例</span><span class=c>如</span><span class=c>，</span><span class=c>当</span><span class=c>前</span><span class=c>接</span><span class=c>口</span><span class=c>的</span><span class=c>方</span><span class=c>法</span><span class=c>为</span> client.contact.v3.user.batch_get_id()</div>
</body></html>
